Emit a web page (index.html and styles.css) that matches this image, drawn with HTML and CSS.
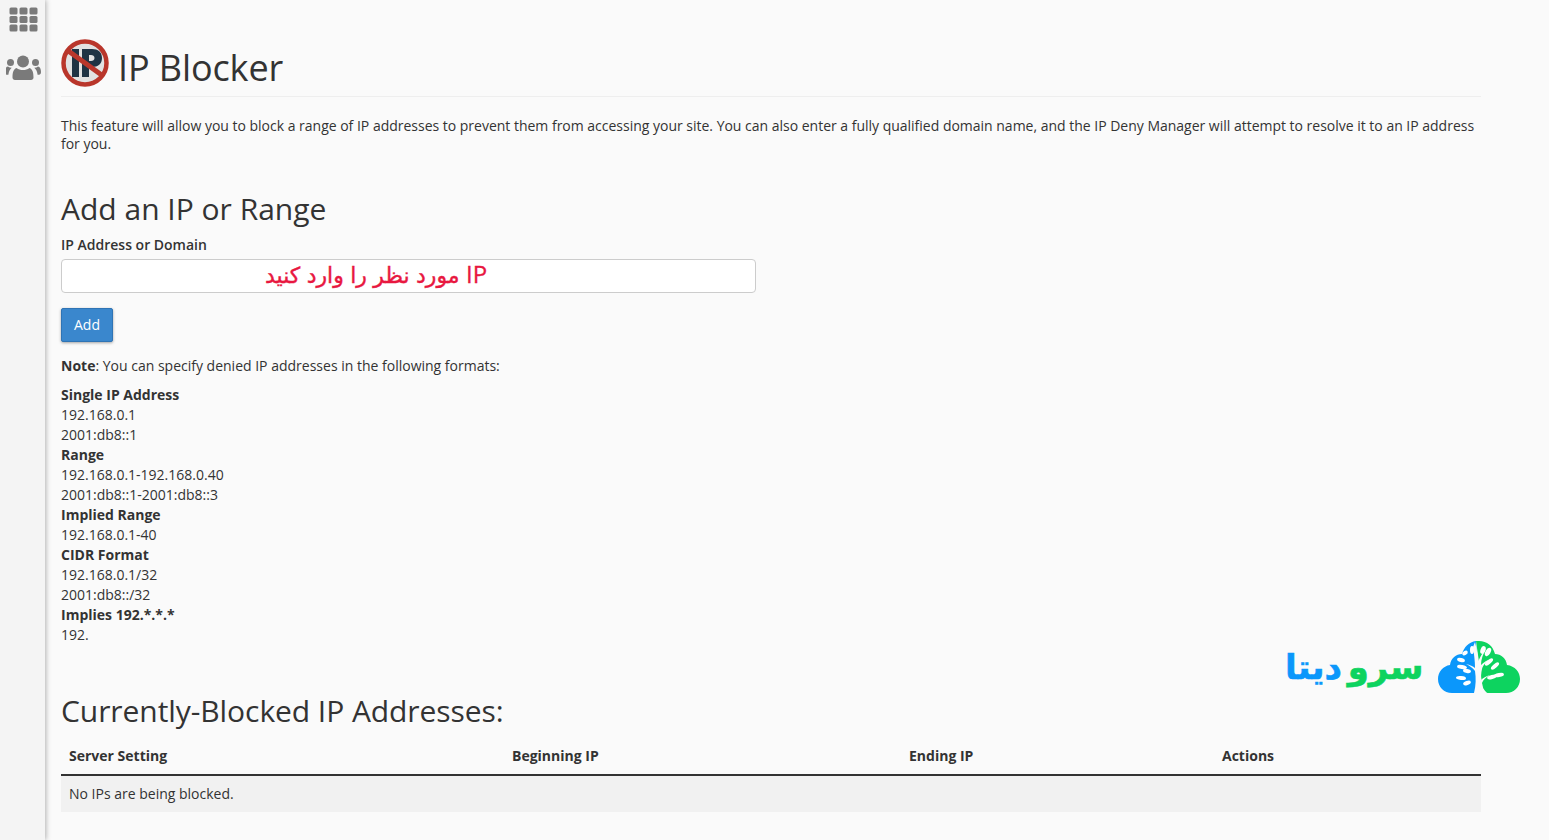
FILE: index.html
```html
<!DOCTYPE html>
<html lang="en">
<head>
    <meta charset="UTF-8">
    <meta name="viewport" content="width=device-width, initial-scale=1.0">
    <title>IP Blocker</title>
    <link rel="stylesheet" href="styles.css">
</head>
<body>
    <nav class="sidebar">
        <a class="side-link" href="#">
            <svg width="30" height="26" viewBox="0 0 30 26">
                <g fill="#7a7a7a">
                    <rect x="0.500" y="0.500" width="8" height="7" rx="1.500"/><rect x="10.500" y="0.500" width="8" height="7" rx="1.500"/><rect x="20.500" y="0.500" width="8" height="7" rx="1.500"/>
                    <rect x="0.500" y="9" width="8" height="7" rx="1.500"/><rect x="10.500" y="9" width="8" height="7" rx="1.500"/><rect x="20.500" y="9" width="8" height="7" rx="1.500"/>
                    <rect x="0.500" y="17.500" width="8" height="7" rx="1.500"/><rect x="10.500" y="17.500" width="8" height="7" rx="1.500"/><rect x="20.500" y="17.500" width="8" height="7" rx="1.500"/>
                </g>
            </svg>
        </a>
        <a class="side-link" href="#">
            <svg width="36" height="26" viewBox="1 0 36 26">
                <g fill="#7a7a7a">
                    <circle cx="18" cy="6.500" r="6"/>
                    <circle cx="5.500" cy="7.500" r="3.500"/>
                    <circle cx="30.500" cy="7.500" r="3.500"/>
                    <path d="M10 25c-1.500 0-2.500-1-2.500-2.500 0-5 1-8.500 4-9.500 2 1.500 4 2 6.500 2s4.500-.5 6.500-2c3 1 4 4.500 4 9.500 0 1.500-1 2.500-2.500 2.500z"/>
                    <path d="M0 17c0-3 1-5.500 3-5.500 1 .8 2.200 1.200 3.700 1.200-2 1.800-3 4-3.300 7H2c-1.200 0-2-1-2-2.700z"/>
                    <path d="M36 17c0-3-1-5.500-3-5.500-1 .8-2.200 1.200-3.700 1.200 2 1.800 3 4 3.300 7H34c1.200 0 2-1 2-2.700z"/>
                </g>
            </svg>
        </a>
    </nav>

    <main class="content">
        <header class="page-header">
            <svg class="page-icon" width="48" height="48" viewBox="0 0 48 48">
                <circle cx="24" cy="24" r="21.500" fill="#e2e2e2" stroke="#b9362b" stroke-width="4.500"/>
                <g fill="#1f3344">
                    <rect x="11" y="10" width="7" height="28"/>
                    <path d="M21 10h10c6 0 10 3 10 9s-4 9-10 9h-3v10h-7zm7 6v6h2c2 0 3.500-1 3.500-3s-1.500-3-3.500-3z"/>
                </g>
                <path d="M6 11l36 26" stroke="#b9362b" stroke-width="5"/>
            </svg>
            <h1>IP Blocker</h1>
        </header>

        <p class="description">This feature will allow you to block a range of IP addresses to prevent them from accessing your site. You can also enter a fully qualified domain name, and the IP Deny Manager will attempt to resolve it to an IP address for you.</p>

        <h2 class="add-title">Add an IP or Range</h2>
        <form class="add-form">
            <label class="field-label" for="ip">IP Address or Domain</label>
            <div class="field-wrap">
                <input type="text" id="ip" class="field">
                <span class="field-note" dir="rtl"><span class="field-note-ip">IP</span> مورد نظر را وارد کنید</span>
            </div>
            <button type="button" class="btn-add">Add</button>
        </form>

        <p class="note"><strong>Note</strong>: You can specify denied IP addresses in the following formats:</p>
        <div class="formats">
            <strong>Single IP Address</strong>
            <div>192.168.0.1</div>
            <div>2001:db8::1</div>
            <strong>Range</strong>
            <div>192.168.0.1-192.168.0.40</div>
            <div>2001:db8::1-2001:db8::3</div>
            <strong>Implied Range</strong>
            <div>192.168.0.1-40</div>
            <strong>CIDR Format</strong>
            <div>192.168.0.1/32</div>
            <div>2001:db8::/32</div>
            <strong>Implies 192.*.*.*</strong>
            <div>192.</div>
        </div>

        <h2 class="blocked-title">Currently-Blocked IP Addresses:</h2>
        <table class="blocked-table">
            <thead>
                <tr>
                    <th class="col-setting">Server Setting</th>
                    <th class="col-begin">Beginning IP</th>
                    <th class="col-end">Ending IP</th>
                    <th>Actions</th>
                </tr>
            </thead>
            <tbody>
                <tr>
                    <td colspan="4">No IPs are being blocked.</td>
                </tr>
            </tbody>
        </table>
    </main>

    <div class="brand">
        <span class="brand-name" dir="rtl"><span class="brand-green">سرو</span> <span class="brand-blue">دیتا</span></span>
        <svg width="82" height="54" viewBox="0 0 82 54">
            <path fill="#0b97fb" d="M38 1C31 2 26 7 24 14c-6 0-11 4-12 11C5 26 0 32 0 39c0 8 6 14 14 14h22c3 0 4-1 4-3z"/>
            <path fill="#0dd35f" d="M38 1c1 0 2 0 3 0 8 0 14 5 16 13 6 0 11 4 12 11 8 1 13 7 13 14 0 8-6 14-14 14H50c-3 0-5-1-5-3z"/>
            <path fill="#fafafa" d="M36 53c2-8 2-15 1-22-2-3-5-5-9-7 4 1 7 2 9 4 0-7-1-14-2-21l2-5c2 8 3 14 3 20 2-5 4-9 8-13-3 5-5 10-5 16 3-3 6-5 10-6-4 2-8 6-9 10-1 4-1 8-1 11 2-2 5-4 9-5-4 2-7 5-8 8 0 4 2 7 5 10z"/>
            <g fill="#fff">
                <ellipse cx="27" cy="13" rx="3" ry="2" transform="rotate(-30 27 13)"/>
                <ellipse cx="23" cy="20" rx="4" ry="2" transform="rotate(15 23 20)"/>
                <ellipse cx="24" cy="27" rx="5" ry="2" transform="rotate(10 24 27)"/>
                <ellipse cx="29" cy="31" rx="4" ry="2" transform="rotate(10 29 31)"/>
                <ellipse cx="23" cy="38" rx="5" ry="2" transform="rotate(5 23 38)"/>
                <ellipse cx="29" cy="43" rx="4" ry="2" transform="rotate(-20 29 43)"/>
                <ellipse cx="34" cy="10" rx="2" ry="4"/>
                <ellipse cx="45" cy="10" rx="2.500" ry="4" transform="rotate(20 45 10)"/>
                <ellipse cx="50" cy="12" rx="2.500" ry="4.500" transform="rotate(30 50 12)"/>
                <ellipse cx="51" cy="22" rx="5" ry="2" transform="rotate(-40 51 22)"/>
                <ellipse cx="57" cy="26" rx="5" ry="2" transform="rotate(-40 57 26)"/>
                <ellipse cx="54" cy="37" rx="5" ry="2" transform="rotate(-15 54 37)"/>
                <ellipse cx="61" cy="35" rx="5" ry="2" transform="rotate(-10 61 35)"/>
            </g>
        </svg>
    </div>
</body>
</html>
```

FILE: styles.css
```css
html, body {
    height: 100%;
}
body {
    margin: 0;
    background-color: #fafafa;
    color: #333;
    font-family: "Open Sans", "DejaVu Sans", sans-serif;
    font-size: 14px;
    line-height: 20px;
    display: flex;
    overflow: hidden;
}
.sidebar {
    width: 45px;
    flex-shrink: 0;
    background: #f4f4f4;
    box-shadow: 1px 0 5px rgba(0, 0, 0, 0.3);
    display: flex;
    flex-direction: column;
    align-items: center;
    gap: 22px;
    padding: 7px 0 0 2px;
    box-sizing: border-box;
    height: 840px;
}
.side-link {
    display: block;
    height: 26px;
}
.content {
    width: 1420px;
    margin-left: 16px;
    padding-top: 39px;
}
.page-header {
    display: flex;
    align-items: center;
    gap: 9px;
    padding-bottom: 9px;
    border-bottom: 1px solid #eee;
}
.page-header h1 {
    margin: 0;
    padding-top: 10px;
    font-size: 36px;
    font-weight: 400;
    line-height: 38px;
    letter-spacing: -0.1px;
}
.description {
    margin: 20px 0 0;
    line-height: 18px;
    letter-spacing: -0.01px;
}
.add-title {
    margin: 39px 0 0;
    font-size: 30px;
    font-weight: 400;
    line-height: 33px;
}
.add-form {
    margin-top: 10px;
}
.field-label {
    display: block;
    font-weight: 600;
}
.field-wrap {
    position: relative;
    width: 695px;
    margin-top: 4px;
}
.field {
    display: block;
    width: 100%;
    height: 34px;
    box-sizing: border-box;
    background: #fff;
    border: 1px solid #ccc;
    border-radius: 4px;
}
.field-note {
    position: absolute;
    left: 204px;
    top: 0;
    color: #e8173f;
    font-family: "DejaVu Sans", sans-serif;
    font-size: 22px;
    line-height: 30px;
    word-spacing: -0.6px;
    -webkit-text-stroke: 0.4px #e8173f;
}
.field-note-ip {
    font-family: "Open Sans", sans-serif;
    font-size: 24px;
    -webkit-text-stroke: 0.3px #e8173f;
}
.btn-add {
    display: block;
    margin-top: 15px;
    height: 34px;
    padding: 0 12px 2px;
    background: #3a87cd;
    color: #fff;
    border: 1px solid #2f74b5;
    border-radius: 2px;
    box-shadow: 0 1px 3px rgba(0, 0, 0, 0.35);
    font-family: inherit;
    font-size: 14px;
}
.note {
    margin: 14px 0 0;
}
.formats {
    margin-top: 9px;
}
.formats strong {
    display: block;
    font-weight: 700;
}
.note strong {
    font-weight: 700;
}
.blocked-title {
    margin: 48px 0 0;
    font-size: 30px;
    font-weight: 400;
    line-height: 36px;
    letter-spacing: -0.07px;
}
.blocked-table {
    width: 100%;
    margin-top: 9px;
    border-collapse: collapse;
    table-layout: fixed;
}
.blocked-table th {
    text-align: left;
    padding: 8px;
    line-height: 20px;
    font-weight: 700;
    border-bottom: 2px solid #333;
}
.blocked-table td {
    padding: 8px;
    background: #f1f1f1;
    line-height: 20px;
}
.col-setting {
    width: 427px;
}
.col-begin {
    width: 381px;
}
.col-end {
    width: 297px;
}
.brand {
    position: absolute;
    left: 1285px;
    top: 640px;
    display: flex;
    align-items: center;
    gap: 15px;
}
.brand-name {
    font-family: "DejaVu Sans", sans-serif;
    font-size: 34px;
    font-weight: 700;
    line-height: 54px;
    word-spacing: -6px;
    -webkit-text-stroke: 0.6px;
}
.brand-green {
    color: #0dd35f;
}
.brand-blue {
    color: #0b97fb;
}
```
